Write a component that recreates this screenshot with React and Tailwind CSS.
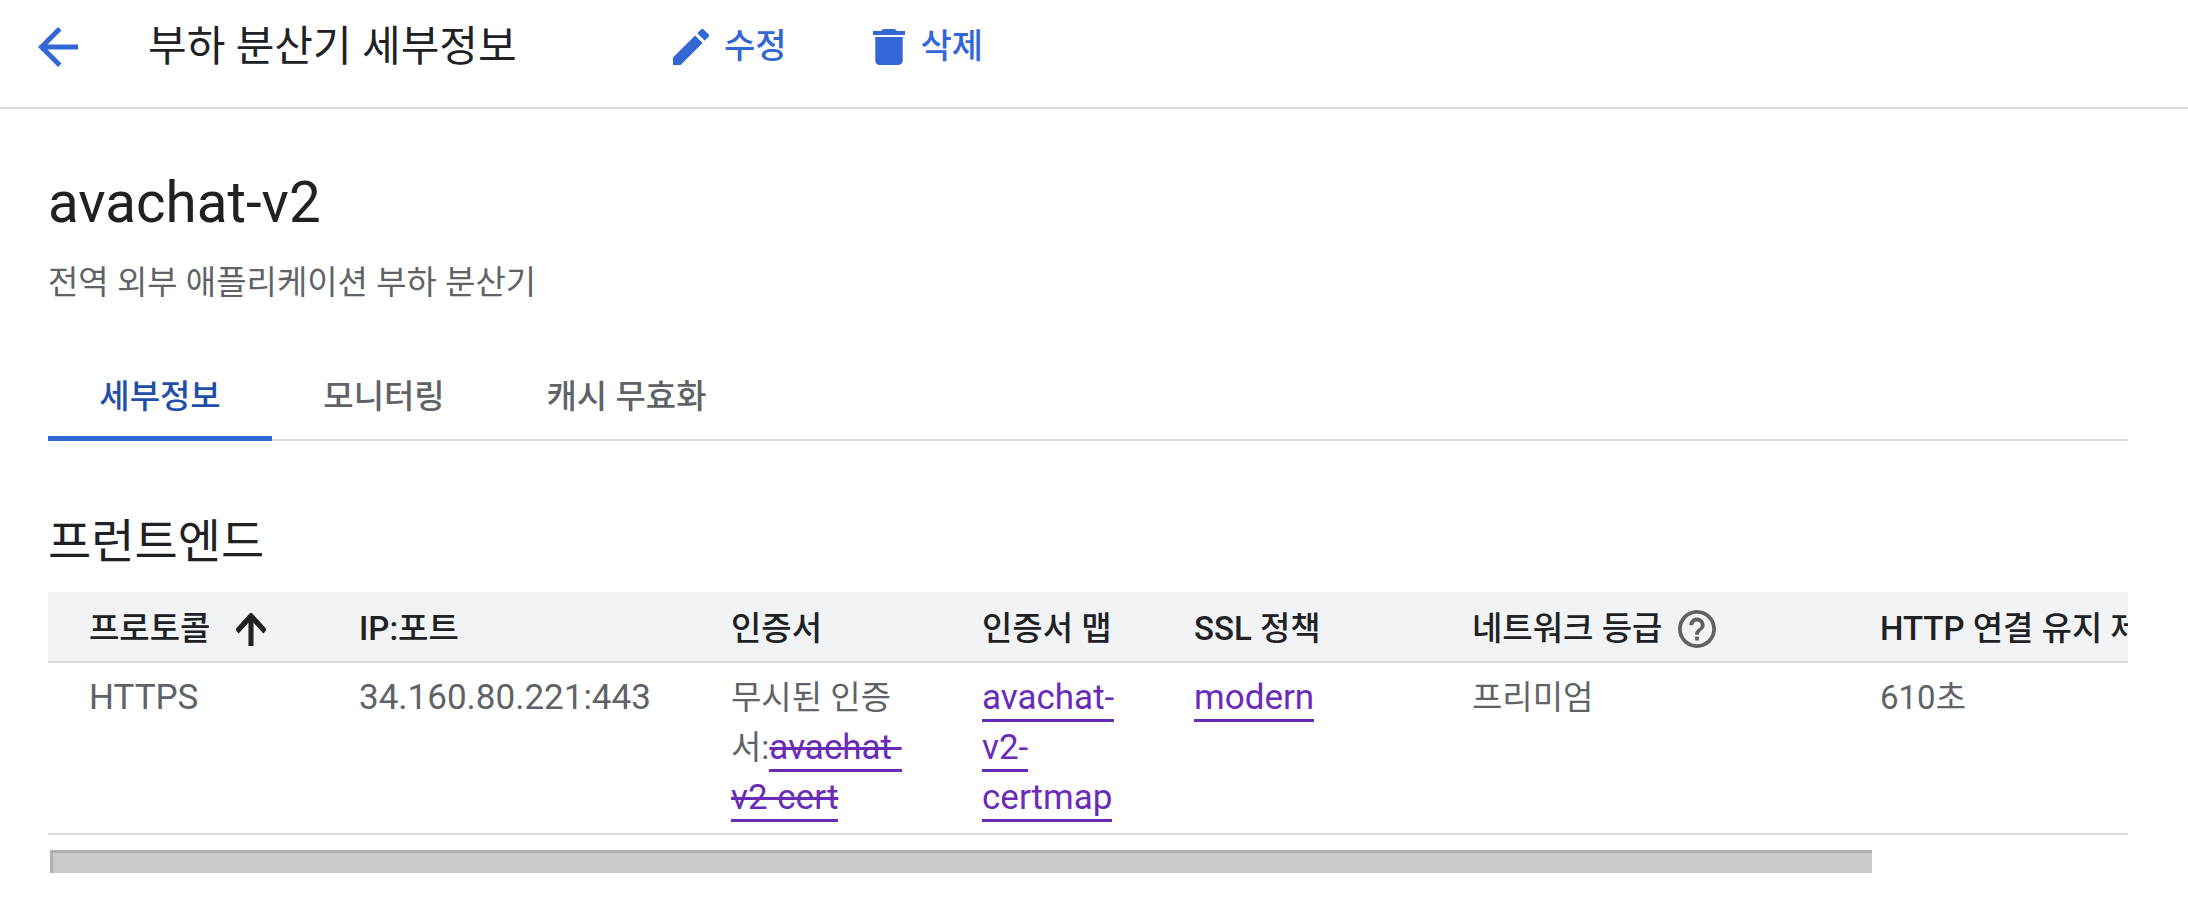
function Link({ children, strike }) {
  return (
    <a className={`text-[35px] text-[#6a2cb8] border-b-[3px] border-[#6a2cb8] pb-[1px] ${strike ? 'line-through' : ''}`}>
      {children}
    </a>
  )
}

function Th({ children, className = '' }) {
  return (
    <th className={`h-[70px] pt-[5px] pl-[41px] pr-[36px] text-left font-medium text-[#202124] whitespace-nowrap ${className}`}>
      {children}
    </th>
  )
}

function Td({ children }) {
  return <td className="pl-[41px] pr-[36px] pt-[10px] pb-[2px] align-top text-[#5f6368]">{children}</td>
}

export default function App() {
  return (
    <div className="w-[2188px] h-[924px] bg-white overflow-hidden font-['Roboto','Noto_Sans_CJK_KR',sans-serif]">
      <header className="h-[109px] pb-[14px] flex items-center border-b-2 border-[#dadce0]">
        <svg className="ml-[38px] w-[40px] h-[40px] text-[#3367d6]" viewBox="4 4 16 16" fill="currentColor">
          <path d="M20 11H7.83l5.59-5.59L12 4l-8 8 8 8 1.41-1.41L7.83 13H20v-2z" />
        </svg>
        <h1 className="ml-[70px] text-[42px] font-normal text-[#202124] w-[525px]">부하 분산기 세부정보</h1>
        <button className="flex items-center gap-[15px] text-[#3367d6] text-[34px] font-medium">
          <svg className="w-[36px] h-[36px]" viewBox="3 3 18 18" fill="currentColor">
            <path d="M3 17.25V21h3.75L17.81 9.94l-3.75-3.75L3 17.25zM20.71 7.04a1 1 0 0 0 0-1.41l-2.34-2.34a1 1 0 0 0-1.41 0l-1.83 1.83 3.75 3.75 1.83-1.83z" />
          </svg>
          수정
        </button>
        <button className="ml-[86px] flex items-center gap-[16px] text-[#3367d6] text-[34px] font-medium">
          <svg className="w-[32px] h-[36px]" viewBox="5 3 14 18" preserveAspectRatio="none" fill="currentColor">
            <path d="M6 19c0 1.1.9 2 2 2h8c1.1 0 2-.9 2-2V7H6v12zM19 4h-3.5l-1-1h-5l-1 1H5v2h14V4z" />
          </svg>
          삭제
        </button>
      </header>

      <main className="pl-[48px] pr-[60px]">
        <h2 className="mt-[64px] text-[56.5px] leading-[60px] font-normal text-[#202124]">avachat-v2</h2>
        <p className="mt-[28px] text-[33px] leading-[44px] text-[#5f6368]">전역 외부 애플리케이션 부하 분산기</p>

        <nav className="mt-[52px] flex border-b-2 border-[#dadce0] h-[84px]">
          <div className="w-[224px] h-[84px] flex items-center justify-center border-b-[5px] border-[#3367d6] text-[#1f4fa8] text-[33px] font-medium">세부정보</div>
          <div className="w-[224px] h-[84px] pb-[5px] flex items-center justify-center text-[#5f6368] text-[33px] font-medium">모니터링</div>
          <div className="w-[261px] h-[84px] pb-[5px] flex items-center justify-center text-[#5f6368] text-[33px] font-medium">캐시 무효화</div>
        </nav>

        <h3 className="mt-[71px] text-[47px] leading-[60px] font-normal text-[#202124]">프런트엔드</h3>

        <div className="mt-[20px] overflow-hidden">
          <table className="table-fixed w-[2600px] border-collapse text-[33px] leading-[50px]">
            <colgroup>
              <col className="w-[270px]" />
              <col className="w-[372px]" />
              <col className="w-[251px]" />
              <col className="w-[212px]" />
              <col className="w-[278px]" />
              <col className="w-[408px]" />
              <col className="w-[809px]" />
            </colgroup>
            <thead>
              <tr className="bg-[#f1f3f4] border-b-2 border-[#dadce0]">
                <Th>
                  <span className="flex items-center gap-[26px]">
                    프로토콜
                    <svg className="w-[30px] h-[33px] text-[#202124]" viewBox="4 4 16 16" preserveAspectRatio="none" fill="currentColor" stroke="currentColor" strokeWidth="0.7">
                      <path d="M4 12l1.41 1.41L11 7.83V20h2V7.83l5.58 5.59L20 12l-8-8-8 8z" />
                    </svg>
                  </span>
                </Th>
                <Th>IP:포트</Th>
                <Th>인증서</Th>
                <Th>인증서 맵</Th>
                <Th>SSL 정책</Th>
                <Th>
                  <span className="flex items-center gap-[16px]">
                    네트워크 등급
                    <svg className="w-[38px] h-[38px] text-[#5f6368]" viewBox="2 2 20 20" fill="currentColor">
                      <path d="M11 18h2v-2h-2v2zm1-16C6.48 2 2 6.48 2 12s4.48 10 10 10 10-4.48 10-10S17.52 2 12 2zm0 18c-4.41 0-8-3.59-8-8s3.59-8 8-8 8 3.59 8 8-3.59 8-8 8zm0-14c-2.21 0-4 1.79-4 4h2c0-1.1.9-2 2-2s2 .9 2 2c0 2-3 1.75-3 5h2c0-2.25 3-2.5 3-5 0-2.21-1.79-4-4-4z" />
                    </svg>
                  </span>
                </Th>
                <Th>HTTP 연결 유지 제한 시간</Th>
              </tr>
            </thead>
            <tbody>
              <tr className="border-b-2 border-[#dadce0] h-[172px]">
                <Td><span className="text-[35px]">HTTPS</span></Td>
                <Td><span className="text-[35px]">34.160.80.221:443</span></Td>
                <Td>무시된 인증서:<Link strike>avachat-v2-cert</Link></Td>
                <Td><Link>avachat-v2-certmap</Link></Td>
                <Td><Link>modern</Link></Td>
                <Td>프리미엄</Td>
                <Td>610초</Td>
              </tr>
            </tbody>
          </table>
        </div>

        <div className="mt-[15px] ml-[2px] w-[1822px] h-[23px] bg-[#cacaca] border-l-[3px] border-t-[3px] border-[#b0b0b0]"></div>
      </main>
    </div>
  )
}
